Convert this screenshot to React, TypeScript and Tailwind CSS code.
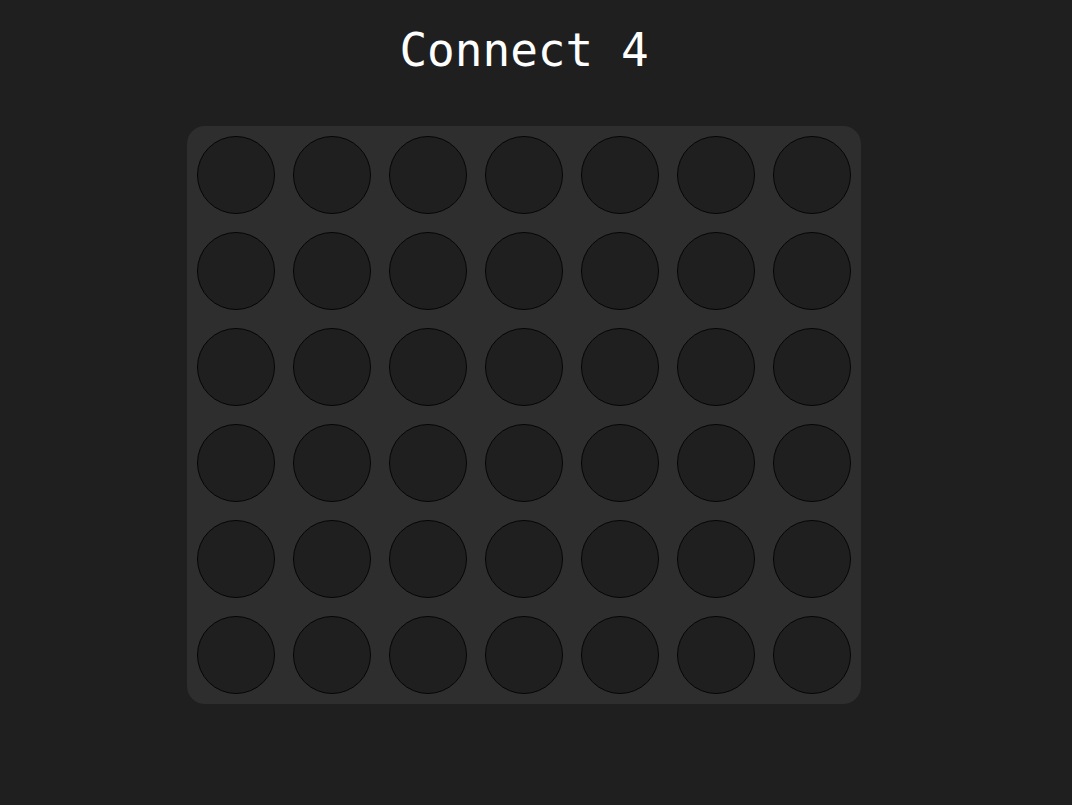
const ROWS = 6;
const COLS = 7;

const App = () => {
  const cells = Array.from({ length: ROWS * COLS });

  return (
    <div className="min-h-screen bg-[#1f1f1f] text-white">
      <div className="w-[1048px] flex flex-col items-center">
        <h1 className="mt-[22px] text-[46px] leading-[56px] font-['DejaVu_Sans_Mono',monospace]">
          Connect 4
        </h1>
        <div className="mt-[48px] grid grid-cols-7 gap-[18px] p-[10px] bg-[#2e2e2e] rounded-[18px]">
          {cells.map((_, i) => (
            <div
              key={i}
              className="w-[78px] h-[78px] rounded-full bg-[#1f1f1f] border border-[#050505]"
            />
          ))}
        </div>
      </div>
    </div>
  );
};

export default App;
